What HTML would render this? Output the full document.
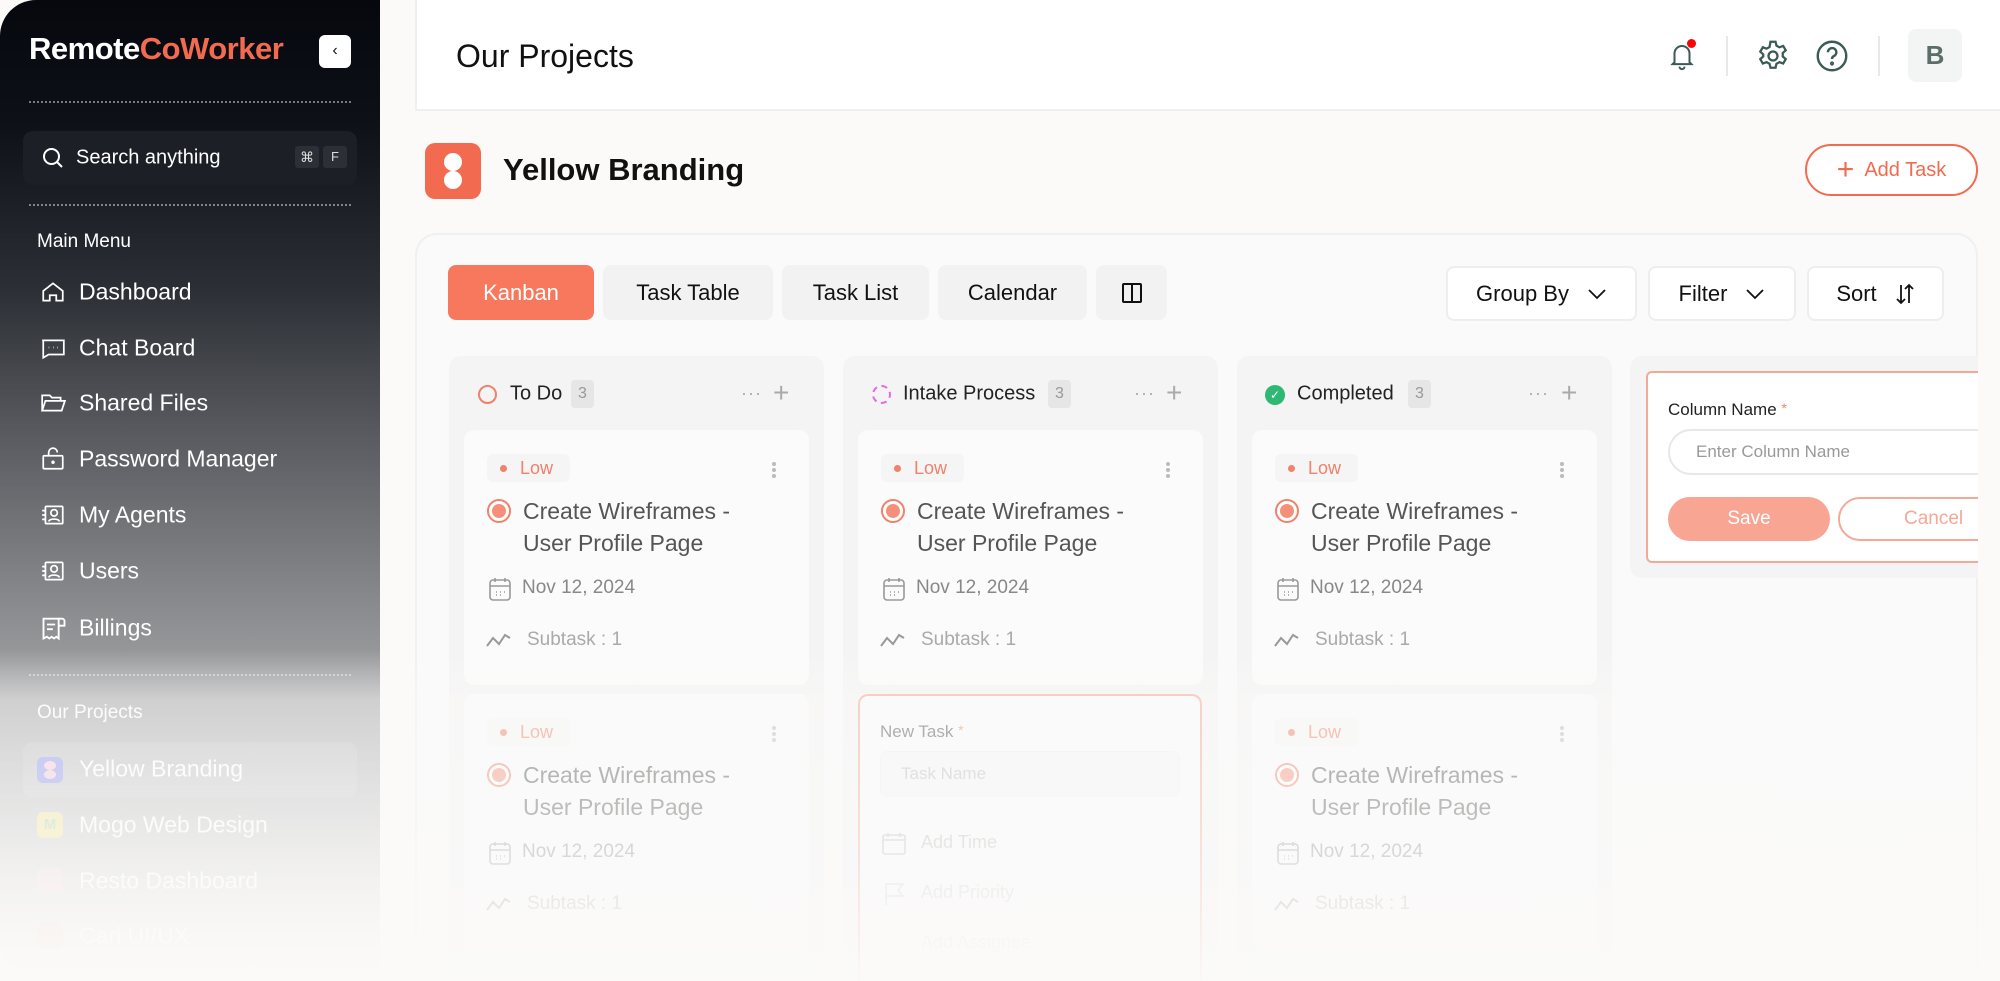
<!DOCTYPE html>
<html><head><meta charset="utf-8">
<style>
*{box-sizing:border-box;margin:0;padding:0}
html,body{width:2000px;height:981px;overflow:hidden}
body{background:#fbfaf9;font-family:"Liberation Sans",sans-serif;position:relative}
.a{position:absolute}
.sb{left:0;top:0;width:380px;height:981px;border-radius:36px 0 0 36px;background:linear-gradient(180deg,#06080e 0px,#0d1017 120px,#2c2f35 290px,#5a5c61 440px,#88898c 600px,#a9aaac 720px,#cfcfd0 850px,#f4f3f2 975px)}
.sb .t{color:#fff;font-size:23px;position:absolute;left:79px;transform:translateY(-50%)}
.sb svg.ic{position:absolute;left:40px;transform:translateY(-50%)}
.dots{position:absolute;left:29px;width:322px;border-top:2px dotted rgba(255,255,255,.45)}
.hdr{left:415px;top:0;width:1585px;height:111px;background:#fff;border-bottom:2px solid #efefef;border-left:2px solid #efefef}
.panel{left:415px;top:233px;width:1563px;height:748px;background:#fafafa;border:2px solid #f0f0f0;border-bottom:none;border-radius:22px 22px 0 0;overflow:hidden}
.tab{position:absolute;top:265px;height:55px;border-radius:8px;background:#f2f2f2;font-size:22px;color:#111;display:flex;align-items:center;justify-content:center}
.btn{position:absolute;top:266px;height:55px;border-radius:8px;background:#fff;border:2px solid #eeeeee;font-size:22px;color:#111;display:flex;align-items:center;justify-content:center;gap:18px}
.col{position:absolute;top:356px;width:375px;height:625px;background:#f4f4f4;border-radius:12px 12px 0 0}
.card{position:absolute;width:345px;height:255px;background:#fbfbfb;border-radius:10px}
.badge{position:absolute;left:23px;top:24px;width:83px;height:28px;background:#f5f5f5;border-radius:6px;color:#f0816a;font-size:18px;line-height:28px;padding-left:33px}
.badge:before{content:"";position:absolute;left:13px;top:11px;width:7px;height:7px;border-radius:50%;background:#f0816a}
.keb{position:absolute;left:308px;top:32px;width:4px;height:4px;border-radius:50%;background:#bbb;box-shadow:0 6px 0 #bbb,0 12px 0 #bbb}
.ttl{position:absolute;left:59px;top:65px;font-size:23px;line-height:32px;color:#555}
.tic{position:absolute;left:23px;top:69px;width:24px;height:24px;border-radius:50%;border:2px solid #f0816a;background:#fff}
.tic:after{content:"";position:absolute;left:3px;top:3px;width:14px;height:14px;border-radius:50%;background:#f4907a}
.dt{position:absolute;left:58px;top:147px;font-size:19px;color:#888}
.st{position:absolute;left:63px;top:199px;font-size:19px;color:#aaa}
.ch{position:absolute;top:394px;transform:translateY(-50%);font-size:20px;color:#222}
.cnt{position:absolute;top:380px;width:23px;height:28px;background:#e6e6e6;border-radius:4px;color:#999;font-size:16px;text-align:center;line-height:28px}
.cm{position:absolute;top:383px;color:#aaa;font-size:18px;letter-spacing:1px}
.cp{position:absolute;top:381px;color:#aaa;font-size:28px;font-weight:300;line-height:24px}
.fade{left:0;top:650px;width:2000px;height:331px;background:linear-gradient(180deg,rgba(251,250,249,0) 0,rgba(251,250,249,.5) 50px,rgba(251,250,249,.65) 180px,rgba(251,250,249,.85) 280px,rgba(251,250,249,.97) 331px);pointer-events:none}
.clip{left:0;top:0;width:1978px;height:981px;overflow:hidden}
</style></head><body>

<div class="a sb">
  <div class="a" style="left:29px;top:31px;font-size:31px;font-weight:bold;color:#fff;letter-spacing:-0.5px">Remote<span style="color:#f26a4f">CoWorker</span></div>
  <div class="a" style="left:319px;top:35px;width:32px;height:33px;background:#fff;border-radius:6px;color:#111;font-size:16px;text-align:center;line-height:31px">‹</div>
  <div class="dots" style="top:101px"></div>
  <div class="a" style="left:23px;top:131px;width:334px;height:54px;background:#1c1f26;border-radius:10px"></div>
  <svg class="ic" style="left:41px;top:158px" width="24" height="24" viewBox="0 0 24 24" fill="none" stroke="#fff" stroke-width="2"><circle cx="10.5" cy="10.5" r="7.5"/><path d="M16 16l5 5"/></svg>
  <div class="t" style="left:76px;top:158px;font-size:20px">Search anything</div>
  <div class="a" style="left:295px;top:146px;width:24px;height:22px;background:#2c2f36;border-radius:3px;color:#ddd;font-size:14px;text-align:center;line-height:22px">⌘</div>
  <div class="a" style="left:323px;top:146px;width:24px;height:22px;background:#2c2f36;border-radius:3px;color:#ddd;font-size:13px;text-align:center;line-height:22px">F</div>
  <div class="dots" style="top:204px"></div>
  <div class="t" style="left:37px;top:242px;font-size:19px">Main Menu</div>

  <svg class="ic" style="top:292px" width="26" height="26" viewBox="0 0 24 24" fill="none" stroke="#fff" stroke-width="1.6"><path d="M3 11L12 4l9 7v9h-6v-5H9v5H3z"/></svg>
  <div class="t" style="top:292px">Dashboard</div>
  <svg class="ic" style="top:348px" width="26" height="26" viewBox="0 0 24 24" fill="none" stroke="#fff" stroke-width="1.6"><path d="M2 5h20v13H8l-5 3V5z"/><path d="M8 11.5h.5M12 11.5h.5M16 11.5h.5"/></svg>
  <div class="t" style="top:348px">Chat Board</div>
  <svg class="ic" style="top:403px" width="26" height="26" viewBox="0 0 24 24" fill="none" stroke="#fff" stroke-width="1.6"><path d="M2 19V5h7l2 2h8v3M2 19l3-9h18l-3 9z"/></svg>
  <div class="t" style="top:403px">Shared Files</div>
  <svg class="ic" style="top:459px" width="26" height="26" viewBox="0 0 24 24" fill="none" stroke="#fff" stroke-width="1.6"><rect x="3" y="9" width="18" height="12" rx="1"/><path d="M8 9V6a4 4 0 0 1 8 0"/><circle cx="12" cy="15" r=".8"/></svg>
  <div class="t" style="top:459px">Password Manager</div>
  <svg class="ic" style="top:515px" width="26" height="26" viewBox="0 0 24 24" fill="none" stroke="#fff" stroke-width="1.6"><rect x="5" y="4" width="16" height="16" rx="1"/><circle cx="13" cy="10" r="3"/><path d="M8 18c1-3 9-3 10 0M2 8h3M2 12h3M2 16h3"/></svg>
  <div class="t" style="top:515px">My Agents</div>
  <svg class="ic" style="top:571px" width="26" height="26" viewBox="0 0 24 24" fill="none" stroke="#fff" stroke-width="1.6"><rect x="5" y="4" width="16" height="16" rx="1"/><circle cx="13" cy="10" r="3"/><path d="M8 18c1-3 9-3 10 0M2 8h3M2 12h3M2 16h3"/></svg>
  <div class="t" style="top:571px">Users</div>
  <svg class="ic" style="top:628px" width="28" height="28" viewBox="0 0 24 24" fill="none" stroke="#fff" stroke-width="1.6"><path d="M3 4h13v17l-2-1.5-2 1.5-2-1.5-2 1.5-2-1.5L3 21z"/><path d="M16 4h3a2 2 0 0 1 2 2v4h-5M6 9h7M6 13h5"/></svg>
  <div class="t" style="top:628px">Billings</div>
  <div class="dots" style="top:674px"></div>
  <div class="t" style="left:37px;top:713px;font-size:19px">Our Projects</div>
  <div class="a" style="left:23px;top:742px;width:334px;height:56px;background:rgba(255,255,255,.12);border-radius:10px"></div>
  <div class="a" style="left:37px;top:757px;width:26px;height:26px;background:#8a93e8;border-radius:6px"></div>
  <div class="a" style="left:44px;top:761px;width:12px;height:9px;border-radius:50%;background:#f3c6d8"></div>
  <div class="a" style="left:44px;top:770px;width:12px;height:9px;border-radius:50%;background:#f3c6d8"></div>
  <div class="t" style="top:769px">Yellow Branding</div>
  <div class="a" style="left:37px;top:812px;width:26px;height:26px;background:#efe49a;border-radius:6px;color:#a8d6a0;font-size:15px;font-weight:bold;text-align:center;line-height:26px">M</div>
  <div class="t" style="top:825px">Mogo Web Design</div>
  <div class="a" style="left:37px;top:868px;width:26px;height:26px;background:#ecd6e0;border-radius:6px"></div>
  <div class="t" style="top:881px">Resto Dashboard</div>
  <div class="a" style="left:37px;top:923px;width:26px;height:26px;background:#eed8d0;border-radius:6px"></div>
  <div class="t" style="top:936px">Carl UI/UX</div>
</div>

<div class="a hdr">
  <div class="a" style="left:39px;top:38px;font-size:32px;color:#111">Our Projects</div>
  <svg class="a" style="left:1250px;top:41px" width="30" height="30" viewBox="0 0 24 24" fill="none" stroke="#3b5a55" stroke-width="1.6"><path d="M6 17V10a6 6 0 0 1 12 0v7l1.5 1.5h-15zM10 20.5a2 2 0 0 0 4 0"/></svg>
  <div class="a" style="left:1270px;top:39px;width:9px;height:9px;border-radius:50%;background:#f00"></div>
  <div class="a" style="left:1309px;top:36px;width:2px;height:40px;background:#e8e8e8"></div>
  <svg class="a" style="left:1338px;top:38px" width="36" height="36" viewBox="0 0 24 24" fill="none" stroke="#3b5a55" stroke-width="1.5"><circle cx="12" cy="12" r="3"/><path d="M10.3 2.5h3.4l.6 2.6 2 1.1 2.5-.9 1.7 2.9-2 1.8v2.3l2 1.8-1.7 2.9-2.5-.9-2 1.1-.6 2.6h-3.4l-.6-2.6-2-1.1-2.5.9-1.7-2.9 2-1.8V10.9l-2-1.8 1.7-2.9 2.5.9 2-1.1z"/></svg>
  <svg class="a" style="left:1397px;top:38px" width="36" height="36" viewBox="0 0 24 24" fill="none" stroke="#3b5a55" stroke-width="1.6"><circle cx="12" cy="12" r="9.5"/><path d="M9.3 9.5a2.8 2.8 0 1 1 3.8 2.6c-.8.4-1.1 1-1.1 1.9"/><circle cx="12" cy="17" r=".6"/></svg>
  <div class="a" style="left:1461px;top:36px;width:2px;height:40px;background:#e8e8e8"></div>
  <div class="a" style="left:1491px;top:29px;width:54px;height:53px;background:#f3f4f4;border-radius:8px;color:#5c6e6a;font-size:26px;font-weight:bold;text-align:center;line-height:53px">B</div>
</div>

<div class="a" style="left:425px;top:143px;width:56px;height:56px;background:#f26a4f;border-radius:10px"></div>
<div class="a" style="left:444px;top:153px;width:18px;height:18px;border-radius:50%;background:#fff"></div>
<div class="a" style="left:444px;top:171px;width:18px;height:18px;border-radius:50%;background:#fff"></div>
<div class="a" style="left:503px;top:152px;font-size:31px;font-weight:bold;color:#111">Yellow Branding</div>
<div class="a" style="left:1805px;top:144px;width:173px;height:52px;border:2px solid #f26a4f;border-radius:26px;color:#f26a4f;font-size:20px;display:flex;align-items:center;justify-content:center;gap:10px;background:#fff"><span style="font-size:30px;font-weight:300;line-height:20px">+</span>Add Task</div>

<div class="a clip">
<div class="a panel"></div>
<div class="tab" style="left:448px;width:146px;background:#f7785c;color:#fff">Kanban</div>
<div class="tab" style="left:603px;width:170px">Task Table</div>
<div class="tab" style="left:782px;width:147px">Task List</div>
<div class="tab" style="left:938px;width:149px">Calendar</div>
<div class="tab" style="left:1096px;width:71px"><svg width="22" height="22" viewBox="0 0 22 22" fill="none" stroke="#111" stroke-width="2"><rect x="2" y="2" width="18" height="18" rx="1"/><path d="M11 2v18"/></svg></div>
<div class="btn" style="left:1446px;width:191px">Group By <svg width="20" height="12" viewBox="0 0 20 12" fill="none" stroke="#111" stroke-width="1.8"><path d="M2 2l8 8 8-8"/></svg></div>
<div class="btn" style="left:1648px;width:148px">Filter <svg width="20" height="12" viewBox="0 0 20 12" fill="none" stroke="#111" stroke-width="1.8"><path d="M2 2l8 8 8-8"/></svg></div>
<div class="btn" style="left:1807px;width:137px">Sort <svg width="20" height="22" viewBox="0 0 20 22" fill="none" stroke="#111" stroke-width="1.8"><path d="M6 2v18M2 16l4 4 4-4M14 20V2M10 6l4-4 4 4"/></svg></div>

<div class="col" style="left:449px"></div>
<div class="col" style="left:843px"></div>
<div class="col" style="left:1237px"></div>
<div class="a" style="left:1630px;top:356px;width:348px;height:222px;background:#f4f4f4;border-radius:12px 0 0 12px"></div>

<div class="a" style="left:478px;top:385px;width:19px;height:19px;border-radius:50%;border:2px solid #f0816a"></div>
<div class="ch" style="left:510px">To Do</div><div class="cnt" style="left:571px">3</div><div class="cm" style="left:741px">···</div><div class="cp" style="left:773px">+</div>

<div class="a" style="left:872px;top:385px;width:19px;height:19px;border-radius:50%;border:2px dashed #e66be0"></div>
<div class="ch" style="left:903px">Intake Process</div><div class="cnt" style="left:1048px">3</div><div class="cm" style="left:1134px">···</div><div class="cp" style="left:1166px">+</div>

<div class="a" style="left:1265px;top:385px;width:20px;height:20px;border-radius:50%;background:#2eb872;color:#fff;font-size:12px;text-align:center;line-height:20px">✓</div>
<div class="ch" style="left:1297px">Completed</div><div class="cnt" style="left:1408px">3</div><div class="cm" style="left:1528px">···</div><div class="cp" style="left:1561px">+</div>

<div class="card" style="left:464px;top:430px"><div class="badge">Low</div><div class="keb"></div><div class="tic"></div><div class="ttl">Create Wireframes -<br>User Profile Page</div>
<svg class="a" style="left:25px;top:147px" width="22" height="24" viewBox="0 0 22 24" fill="none" stroke="#999" stroke-width="1.6"><rect x="1" y="3" width="20" height="20" rx="3"/><path d="M1 9h20M6 1v4M16 1v4M7 15h1M11 15h1M15 15h1M7 18h1M11 18h1"/></svg><div class="dt">Nov 12, 2024</div>
<svg class="a" style="left:22px;top:202px" width="26" height="16" viewBox="0 0 26 16" fill="none" stroke="#999" stroke-width="2"><path d="M1 14l6-8 6 6 6-9 5 3"/></svg><div class="st">Subtask : 1</div></div>

<div class="card" style="left:858px;top:430px"><div class="badge">Low</div><div class="keb"></div><div class="tic"></div><div class="ttl">Create Wireframes -<br>User Profile Page</div>
<svg class="a" style="left:25px;top:147px" width="22" height="24" viewBox="0 0 22 24" fill="none" stroke="#999" stroke-width="1.6"><rect x="1" y="3" width="20" height="20" rx="3"/><path d="M1 9h20M6 1v4M16 1v4M7 15h1M11 15h1M15 15h1M7 18h1M11 18h1"/></svg><div class="dt">Nov 12, 2024</div>
<svg class="a" style="left:22px;top:202px" width="26" height="16" viewBox="0 0 26 16" fill="none" stroke="#999" stroke-width="2"><path d="M1 14l6-8 6 6 6-9 5 3"/></svg><div class="st">Subtask : 1</div></div>

<div class="card" style="left:1252px;top:430px"><div class="badge">Low</div><div class="keb"></div><div class="tic"></div><div class="ttl">Create Wireframes -<br>User Profile Page</div>
<svg class="a" style="left:25px;top:147px" width="22" height="24" viewBox="0 0 22 24" fill="none" stroke="#999" stroke-width="1.6"><rect x="1" y="3" width="20" height="20" rx="3"/><path d="M1 9h20M6 1v4M16 1v4M7 15h1M11 15h1M15 15h1M7 18h1M11 18h1"/></svg><div class="dt">Nov 12, 2024</div>
<svg class="a" style="left:22px;top:202px" width="26" height="16" viewBox="0 0 26 16" fill="none" stroke="#999" stroke-width="2"><path d="M1 14l6-8 6 6 6-9 5 3"/></svg><div class="st">Subtask : 1</div></div>

<div class="card" style="left:464px;top:694px"><div class="badge">Low</div><div class="keb"></div><div class="tic"></div><div class="ttl">Create Wireframes -<br>User Profile Page</div>
<svg class="a" style="left:25px;top:147px" width="22" height="24" viewBox="0 0 22 24" fill="none" stroke="#999" stroke-width="1.6"><rect x="1" y="3" width="20" height="20" rx="3"/><path d="M1 9h20M6 1v4M16 1v4M7 15h1M11 15h1M15 15h1M7 18h1M11 18h1"/></svg><div class="dt">Nov 12, 2024</div>
<svg class="a" style="left:22px;top:202px" width="26" height="16" viewBox="0 0 26 16" fill="none" stroke="#999" stroke-width="2"><path d="M1 14l6-8 6 6 6-9 5 3"/></svg><div class="st">Subtask : 1</div></div>

<div class="card" style="left:1252px;top:694px"><div class="badge">Low</div><div class="keb"></div><div class="tic"></div><div class="ttl">Create Wireframes -<br>User Profile Page</div>
<svg class="a" style="left:25px;top:147px" width="22" height="24" viewBox="0 0 22 24" fill="none" stroke="#999" stroke-width="1.6"><rect x="1" y="3" width="20" height="20" rx="3"/><path d="M1 9h20M6 1v4M16 1v4M7 15h1M11 15h1M15 15h1M7 18h1M11 18h1"/></svg><div class="dt">Nov 12, 2024</div>
<svg class="a" style="left:22px;top:202px" width="26" height="16" viewBox="0 0 26 16" fill="none" stroke="#999" stroke-width="2"><path d="M1 14l6-8 6 6 6-9 5 3"/></svg><div class="st">Subtask : 1</div></div>

<div class="a" style="left:858px;top:694px;width:344px;height:287px;background:#fbfbfb;border:2px solid #f5a896;border-bottom:none;border-radius:10px 10px 0 0;overflow:hidden">
  <div class="a" style="left:20px;top:26px;font-size:17px;color:#555">New Task <span style="color:#f0816a;font-size:14px;vertical-align:top">*</span></div>
  <div class="a" style="left:20px;top:55px;width:300px;height:46px;border:1px solid #eee;border-radius:8px;background:#f6f6f6;color:#bbb;font-size:17px;line-height:44px;padding-left:20px">Task Name</div>
  <svg class="a" style="left:22px;top:136px" width="24" height="24" viewBox="0 0 24 24" fill="none" stroke="#bbb" stroke-width="1.6"><rect x="1" y="3" width="22" height="19" rx="2"/><path d="M1 8h22M6 1v4M18 1v4"/></svg>
  <div class="a" style="left:61px;top:136px;font-size:18px;color:#bbb">Add Time</div>
  <svg class="a" style="left:24px;top:186px" width="22" height="24" viewBox="0 0 22 24" fill="none" stroke="#ccc" stroke-width="1.6"><path d="M2 23V2h17l-5 6 5 6H2"/></svg>
  <div class="a" style="left:61px;top:186px;font-size:18px;color:#ccc">Add Priority</div>
  <div class="a" style="left:61px;top:236px;font-size:18px;color:#ddd">Add Assignee</div>
</div>

<div class="a" style="left:1646px;top:371px;width:332px;height:192px;background:#fff;border:2px solid #f5a896;border-right:none;border-radius:6px 0 0 6px;overflow:hidden">
  <div class="a" style="left:20px;top:27px;font-size:17px;color:#222">Column Name <span style="color:#f0816a;font-size:14px;vertical-align:top">*</span></div>
  <div class="a" style="left:20px;top:56px;width:340px;height:46px;border:2px solid #e8e8e8;border-radius:23px;color:#999;font-size:17px;line-height:42px;padding-left:26px">Enter Column Name</div>
  <div class="a" style="left:20px;top:124px;width:162px;height:44px;background:#f8a593;border-radius:22px;color:#fff;font-size:19px;text-align:center;line-height:44px">Save</div>
  <div class="a" style="left:190px;top:124px;width:200px;height:44px;border:2px solid #f5a896;border-radius:22px;color:#f5a896;font-size:19px;line-height:40px;padding-left:64px">Cancel</div>
</div>
</div>

<div class="a fade"></div>
</body></html>
